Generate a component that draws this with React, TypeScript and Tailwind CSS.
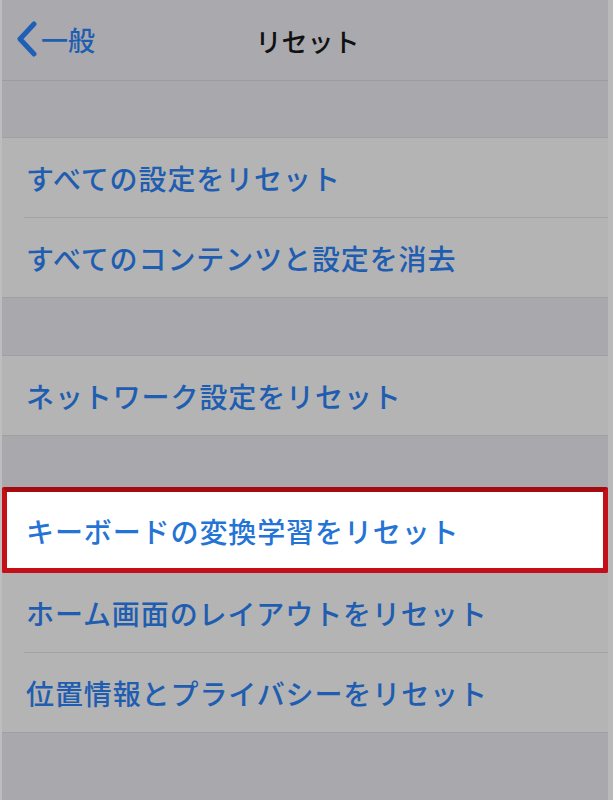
const rows1 = ["すべての設定をリセット", "すべてのコンテンツと設定を消去"];
const rows3 = ["ホーム画面のレイアウトをリセット", "位置情報とプライバシーをリセット"];

function Row({ label, last }: { label: string; last?: boolean }) {
  return (
    <div className="flex flex-col pl-[22px]">
      <div className="flex h-[79px] items-center pl-[2px] text-[28px] font-medium tracking-[0.9px] text-[#1f5db0]">
        {label}
      </div>
      {!last && <div className="h-px bg-[#a3a3a6]" />}
    </div>
  );
}

export default function App() {
  return (
    <div
      className="flex h-[800px] w-[613px] flex-col overflow-hidden border-l-2 border-r-[5px] border-l-[#bdbdc0] border-r-[#b9b9bc] bg-[#a9a8ad]"
      style={{ fontFamily: '"Noto Sans CJK JP", "Noto Sans", sans-serif' }}
    >
      <div className="relative flex h-[81px] items-center border-b border-[#9b9ba0] bg-[#aaa9ae]">
        <div className="flex items-center pl-[13px] text-[#1f5db0]">
          <svg width="24" height="36" viewBox="0 0 24 36" className="mt-[-2px]">
            <path d="M19 3 L5 18 L19 33" fill="none" stroke="#1f5fb5" strokeWidth="5" strokeLinecap="round" strokeLinejoin="round" />
          </svg>
          <span className="ml-[2px] text-[27px] font-medium">一般</span>
        </div>
        <div className="absolute inset-x-0 flex justify-center pl-[5px] text-[26px] font-medium text-[#111]">
          リセット
        </div>
      </div>

      <div className="h-[56px]" />
      <div className="border-y border-[#a0a0a4] bg-[#b4b4b5]">
        <Row label={rows1[0]} />
        <Row label={rows1[1]} last />
      </div>

      <div className="h-[57px]" />
      <div className="border-y border-[#a0a0a4] bg-[#b4b4b5]">
        <Row label="ネットワーク設定をリセット" last />
      </div>

      <div className="h-[51px]" />
      <div className="border-b border-[#a0a0a4] bg-[#b4b4b5]">
        <div className="flex h-[86px] items-center rounded-[2px] border-[5px] border-[#c50f18] border-t-[#a50a10] bg-white pl-[19px] pt-[2px] text-[28px] font-medium tracking-[0.9px] text-[#2474d6]">
          キーボードの変換学習をリセット
        </div>
        <Row label={rows3[0]} />
        <Row label={rows3[1]} last />
      </div>
    </div>
  );
}
